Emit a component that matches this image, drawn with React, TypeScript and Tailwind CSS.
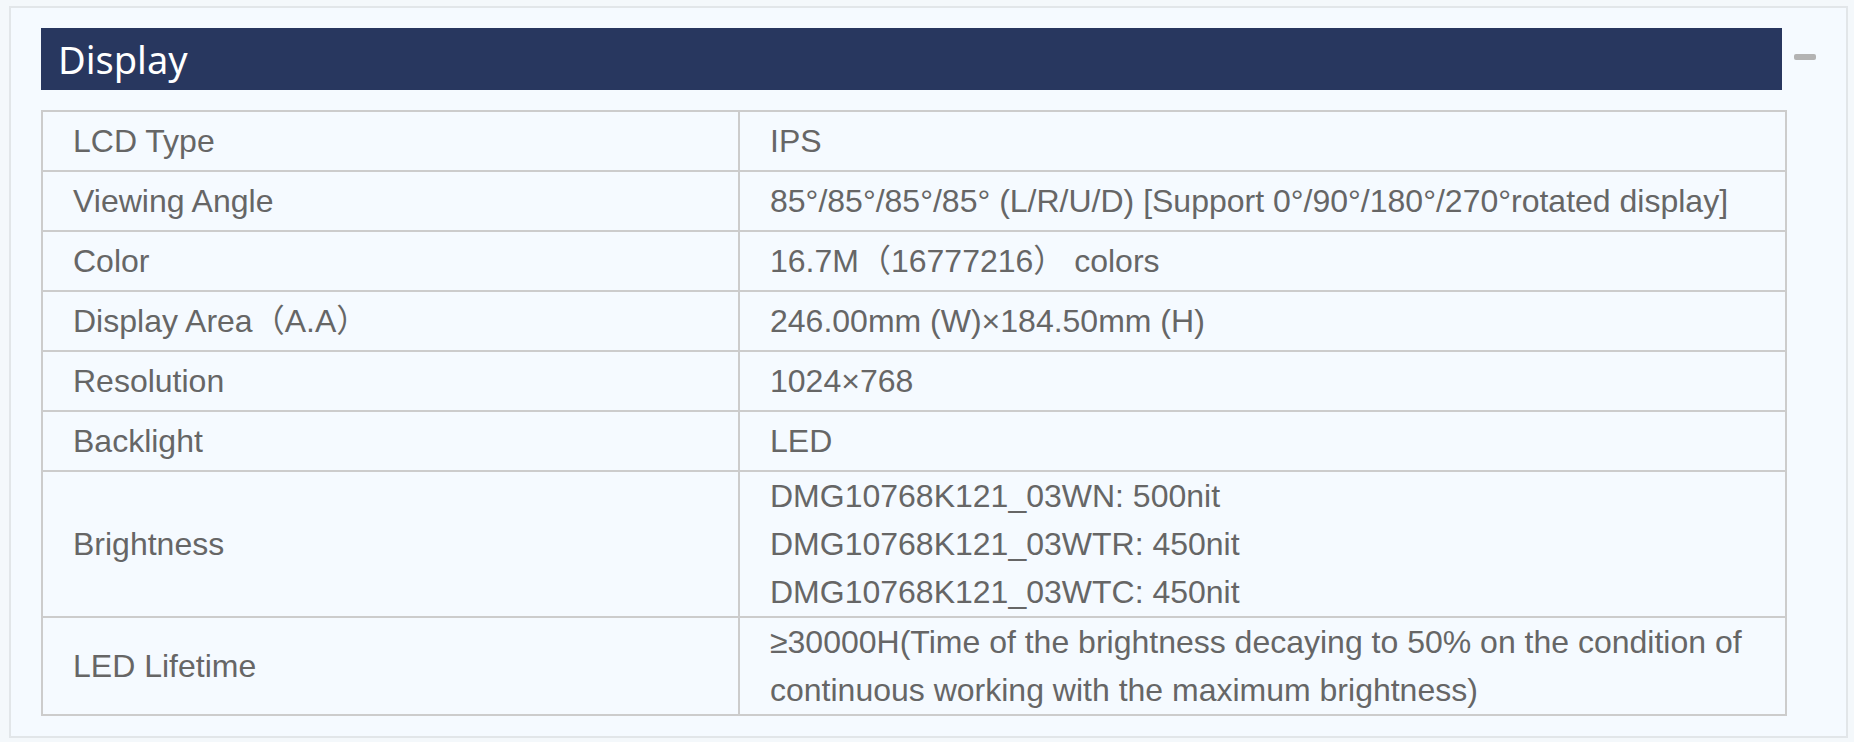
const rows: { label: string; value: string[] }[] = [
  { label: 'LCD Type', value: ['IPS'] },
  {
    label: 'Viewing Angle',
    value: ['85°/85°/85°/85° (L/R/U/D) [Support 0°/90°/180°/270°rotated display]'],
  },
  { label: 'Color', value: ['16.7M（16777216） colors'] },
  { label: 'Display Area（A.A）', value: ['246.00mm (W)×184.50mm (H)'] },
  { label: 'Resolution', value: ['1024×768'] },
  { label: 'Backlight', value: ['LED'] },
  {
    label: 'Brightness',
    value: [
      'DMG10768K121_03WN: 500nit',
      'DMG10768K121_03WTR: 450nit',
      'DMG10768K121_03WTC: 450nit',
    ],
  },
  {
    label: 'LED Lifetime',
    value: [
      '≥30000H(Time of the brightness decaying to 50% on the condition of continuous working with the maximum brightness)',
    ],
  },
];

export default function App() {
  return (
    <div className="w-[1854px] h-[742px] bg-[#f4f8fb] pt-[6px] pl-[9px] pr-[6px] pb-[4px]">
      <div className="flex h-full border-2 border-[#e2e6e9] bg-[#f5faff] pl-[30px] pr-[30px] pt-[20px]">
        <div className="flex-1 flex flex-col gap-[20px]">
          {/* Section header */}
          <div className="mr-[5px] h-[62px] bg-[#28375f] flex items-center pl-[17px]">
            <h2 className="text-white text-[38px] leading-none font-['Noto_Sans',sans-serif]">
              Display
            </h2>
          </div>
          {/* Spec table */}
          <table className="w-full border-collapse border-2 border-[#cccccc] text-[32px] text-[#666666] font-['Liberation_Sans','Noto_Sans_CJK_SC',sans-serif]">
            <tbody>
              {rows.map((row) => (
                <tr key={row.label}>
                  <td className="w-[697px] p-0 border-2 border-[#cccccc] align-middle">
                    <div className="min-h-[58px] flex items-center px-[30px] leading-[48px]">
                      {row.label}
                    </div>
                  </td>
                  <td className="p-0 border-2 border-[#cccccc] align-middle">
                    <div className="min-h-[58px] flex flex-col justify-center pl-[30px] pr-[26px] leading-[48px]">
                      {row.value.map((line) => (
                        <span key={line}>{line}</span>
                      ))}
                    </div>
                  </td>
                </tr>
              ))}
            </tbody>
          </table>
        </div>
        {/* Collapse toggle */}
        <div className="w-[22px] ml-[7px] pt-[26px]">
          <div className="h-[6px] w-[22px] rounded-[2px] bg-[#b3b3b3]" />
        </div>
      </div>
    </div>
  );
}
